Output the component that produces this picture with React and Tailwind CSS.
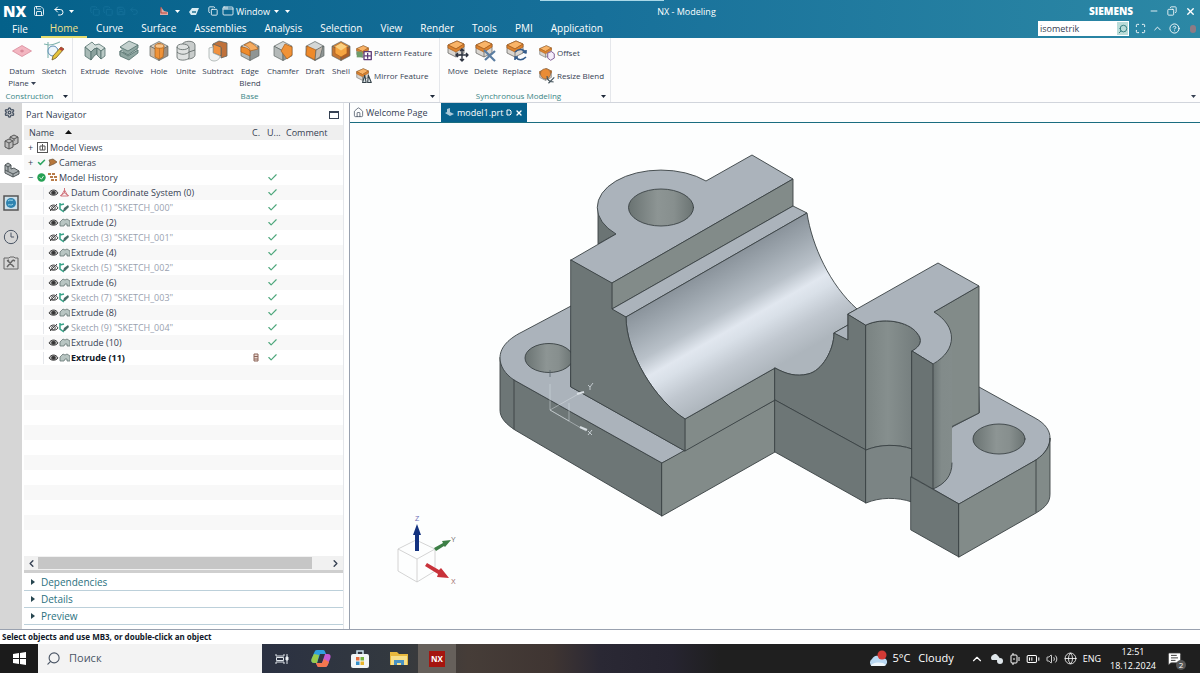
import React, { useState } from "react";
import { Maximize, ChevronUp, ChevronLeft, ChevronRight, CircleHelp, Search, Undo2, Save, AppWindow, Copy, Minus, X, House, Volume2, Globe, BatteryMedium, Settings, Clock3, MessageSquareText, Check } from "lucide-react";

const menu = ["Home", "Curve", "Surface", "Assemblies", "Analysis", "Selection", "View", "Render", "Tools", "PMI", "Application"];

const history = [
    { name: "Datum Coordinate System (0)", kind: "datum" },
    { name: 'Sketch (1) "SKETCH_000"', kind: "sketch" },
    { name: "Extrude (2)", kind: "extrude" },
    { name: 'Sketch (3) "SKETCH_001"', kind: "sketch" },
    { name: "Extrude (4)", kind: "extrude" },
    { name: 'Sketch (5) "SKETCH_002"', kind: "sketch" },
    { name: "Extrude (6)", kind: "extrude" },
    { name: 'Sketch (7) "SKETCH_003"', kind: "sketch" },
    { name: "Extrude (8)", kind: "extrude" },
    { name: 'Sketch (9) "SKETCH_004"', kind: "sketch" },
    { name: "Extrude (10)", kind: "extrude" },
    { name: "Extrude (11)", kind: "extrude", current: true },
];

function Caret({ className }) {
    return (
        <svg className={className} width="5" height="3" viewBox="0 0 5 3"><path d="M0 0h5L2.5 3z" fill="currentColor" /></svg>
    );
}

// Isometric block, the base of most of the feature icons
function Cube({ top = "#d4d7d6", left = "#b4b9b8", right = "#8f9594", children }) {
    return (
        <svg width="22" height="22" viewBox="0 0 22 22" strokeLinejoin="round" stroke="#5c6463" strokeWidth="0.7">
            <path d="M11 1.5 20 6.2 11 11 2 6.2z" fill={top} />
            <path d="M2 6.2 11 11v9.5L2 15.8z" fill={left} />
            <path d="M20 6.2 11 11v9.5l9-4.7z" fill={right} />
            {children}
        </svg>
    );
}

function FeatureIcon({ type }) {
    switch (type) {
        case "plane":
            return (
                <svg width="22" height="22" viewBox="0 0 22 22"><path d="M11 5.5 20.5 11 11 16.5 1.5 11z" fill="#f3b6c1" stroke="#d98a9b" strokeWidth="0.8" /><path d="M11 9.5v3M9 11h4" stroke="#c96d82" strokeWidth="0.7" /></svg>
            );
        case "sketch":
            return (
                <svg width="22" height="22" viewBox="0 0 22 22" fill="none">
                    <path d="M5 2v16M1 4l5 1c6 0 9-3 11-3" stroke="#7fb3ad" strokeWidth="1.1" />
                    <circle cx="10" cy="11" r="5" stroke="#5b8bb3" fill="#eef6fb" />
                    <path d="m18 7 3 2-8 9-4 2 1-4z" fill="#e5c33c" stroke="#6f5a23" strokeWidth="0.8" />
                    <path d="m18 7 3 2-2 2-3-2z" fill="#b8443b" />
                </svg>
            );
        case "extrude":
            return (
                <svg width="22" height="22" viewBox="0 0 22 22" strokeLinejoin="round" stroke="#53706c" strokeWidth="0.8">
                    <path d="M1 7 8 2l3 3 4-1 6 4-4 3-4-3-3 1-3 3z" fill="#d3dedb" />
                    <path d="m1 7 6 5v8l-6-4z" fill="#a7b9b5" />
                    <path d="m7 12 3-3 3-1v6l-2 1-4 5z" fill="#8ba19d" />
                    <path d="m13 8 4 3v8l-4-4z" fill="#a7b9b5" />
                    <path d="m17 11 4-3v8l-4 3z" fill="#b9c9c5" />
                </svg>
            );
        case "revolve":
            return (
                <svg width="22" height="22" viewBox="0 0 22 22" strokeLinejoin="round" stroke="#53706c" strokeWidth="0.8">
                    <path d="m2 7 9-6 9 4-2 3 2 3-9 8-9-4V11l3-1-3-3z" fill="#c3d0cd" />
                    <path d="m2 7 8 4 10-6v3l-10 7-5-3M2 11l8 5 10-6v3l-9 7-9-4z" fill="#8fa6a1" />
                </svg>
            );
        case "hole":
            return (
                <Cube top="#d6cfc6" left="#c9b7a2" right="#9c8e80">
                    <path d="M7 5.5 11 3l5 3-1 11-4 2-4-2z" fill="#ef9237" stroke="#ab5e19" />
                    <ellipse cx="11.5" cy="6" rx="4.5" ry="2.2" fill="#f8c58b" stroke="#ab5e19" />
                    <path d="M11.5 8v10" stroke="#b76f2c" />
                </Cube>
            );
        case "unite":
            return (
                <svg width="22" height="22" viewBox="0 0 22 22" strokeLinejoin="round" stroke="#5c6463" strokeWidth="0.8">
                    <path d="M7 5c1-5 13-5 13 0v10c0 2-3 4-7 4z" fill="#c9cdcc" />
                    <path d="M2 7c0-4 11-4 12 0v11c-2 3-12 3-12-1z" fill="#dfe2e1" />
                    <path d="M2 7c0 3 10 4 12 0M2 12c3 3 9 3 12 0l6-2" fill="none" />
                </svg>
            );
        case "subtract":
            return (
                <svg width="22" height="22" viewBox="0 0 22 22" strokeLinejoin="round" stroke="#5c6463" strokeWidth="0.8">
                    <path d="m6 4 6-3 8 2v13l-6 2V8L6 6z" fill="#c0713a" />
                    <path d="m6 4 8 3v9l-8-3z" fill="#f09240" />
                    <path d="m2 8 4-1v6l7 3c0 3-3 5-6 5s-5-2-5-4z" fill="#f1f3f3" stroke="#a5adac" />
                </svg>
            );
        case "blend":
            return <Cube><path d="M2 7c4 0 7 1 9 4v5L2 12z" fill="#ef8c2c" stroke="#a95d1a" /><path d="M11 11c0-3-3-5-6-6l6-3 3 2c3 2 4 3 5 5z" fill="#f5ac61" stroke="#a95d1a" /></Cube>;
        case "chamfer":
            return <Cube><path d="m13 4 7 3v8l-5 4-6-8z" fill="#f09237" stroke="#a95d1a" /></Cube>;
        case "draft":
            return <Cube><path d="m3 6 9 4-1 10-9-5z" fill="#ee8a2b" stroke="#a95d1a" /><path d="m12 10 7-4-3 11-5 3z" fill="#c3bab0" /></Cube>;
        case "shell":
            return <Cube top="#d9883a" left="#c37635" right="#a85e2a"><path d="m11 3 6 3.5v7L11 17l-6-3.5v-7z" fill="#f6a541" stroke="#b05f1a" /><path d="m5 6.5 6 4 6-4L11 3z" fill="#fbd07f" stroke="none" /></Cube>;
        default:
            return null;
    }
}

// Orange block with a small mark in the corner, for the modeling commands
function OpIcon({ mark, size = 22 }) {
    return (
        <svg width={size} height={size} viewBox="0 0 22 22" strokeLinejoin="round" strokeWidth="0.8">
            <path d="m1 5 9-4 7 3v9l-8 4-8-4z" fill="#d9d5d0" stroke="#6a6a68" />
            <path d="m1 5 9-4 7 3-8 5z" fill="#f9b468" stroke="#a96120" />
            <path d="m9 9 8-5v3l-8 5-8-4V5z" fill="#e0842e" stroke="#a96120" />
            <path d="M9 12v5" stroke="#6a6a68" />
            {mark === "move" && <path d="M15 9v12M9 15h12M13 11l2-2 2 2M13 19l2 2 2-2M11 13l-2 2 2 2M19 13l2 2-2 2" fill="none" stroke="#2d3340" strokeWidth="1.4" />}
            {mark === "delete" && <path d="m9 10 11 11M20 11 10 20" fill="none" stroke="#5b7da1" strokeWidth="2.2" />}
            {mark === "replace" && <path d="M9 12c4-4 9-3 11 1l-3-1m3 1v-3M20 17c-4 4-8 3-11 0l3 0m-3 0v3" fill="none" stroke="#355c8b" strokeWidth="1.6" />}
            {mark === "pattern" && <><path d="M1 9h8v8H1z" fill="#6f9c6a" /><path d="M11 9h10v11H11zM16 11v8M12 15h8" fill="#fff" stroke="#5d3a76" strokeWidth="1.8" /></>}
            {mark === "mirror" && <path d="m9 20 3-10 2 10zM16 20l1-10 4 10z" fill="#dce3e6" stroke="#35434a" strokeWidth="1.5" />}
            {mark === "offset" && <path d="m12 11 5-2 4 3v6l-5 3-4-3z" fill="#f5eefb" stroke="#7d5a93" strokeWidth="1.3" />}
            {mark === "resize" && <><circle cx="9" cy="8" r="7" fill="#e98c36" stroke="#7a5b3e" /><path d="M11 11c0 5 3 8 9 8M13 21l8-8" fill="none" stroke="#46555e" strokeWidth="1.6" /></>}
        </svg>
    );
}

function BigButton({ label, icon, mark, width, dropdown }) {
    return (
        <button className={`flex flex-col items-center ${width}`}>
            {mark ? <OpIcon mark={mark} /> : <FeatureIcon type={icon} />}
            <span className="mt-[3px] leading-3">{label}{dropdown && <Caret className="ml-0.5 inline" />}</span>
        </button>
    );
}

function SmallButton({ label, mark }) {
    return (
        <button className="flex items-center gap-0.5 whitespace-nowrap">
            <OpIcon mark={mark} size={16} />{label}
        </button>
    );
}

function GroupLabel({ children }) {
    return (
        <div className="mt-auto flex h-3 items-center justify-center text-[#3a8686]">
            <span className="flex-1 text-center">{children}</span>
            <button className="px-1 text-gray-800" aria-label={`${children} options`}><Caret /></button>
        </div>
    );
}

function Header() {
    const [active, setActive] = useState("Home");
    return (
        <header className="relative bg-linear-to-r from-[#04618a] via-[#17709a] to-[#2c88a5] text-white">
            <div className="absolute top-0 left-[45%] h-px w-[124px] bg-[#a9d8e8]"></div>
            <div className="grid h-[19px] grid-cols-[1fr_auto_1fr] items-center pr-1 pl-[3px] text-[9px]">
                <div className="flex items-center">
                    <span className="w-[30px] text-[15px] font-extrabold">NX</span>
                    <Save size={12} strokeWidth={1.7} />
                    <Undo2 size={12} className="ml-2" strokeWidth={2} />
                    <Caret className="ml-1" />
                    <div className="ml-4 flex gap-[3px] text-[#16719a]">
                        <Copy size={10} /><Copy size={10} /><Save size={10} /><Undo2 size={10} />
                    </div>
                    <svg className="ml-5" width="10" height="10" viewBox="0 0 10 10"><path d="M2 1l3 4 4 1v3H1z" fill="#dfa9a3" /><path d="M2 1v6h6" stroke="#b9483e" fill="none" /></svg>
                    <Caret className="ml-1.5" />
                    <svg className="ml-2" width="12" height="9" viewBox="0 0 12 9"><path d="M1 5 4 1h7L8 8H3z" fill="#d8ecf3" /><path d="M4 5h4" stroke="#21708f" strokeWidth="1.5" /></svg>
                    <Copy size={10} className="ml-2" />
                    <AppWindow size={12} className="ml-1" strokeWidth={1.6} />
                    <span className="ml-0.5">Window</span>
                    <Caret className="ml-1" />
                    <Caret className="ml-1.5" />
                </div>
                <h1 className="pl-[174px]">NX - Modeling</h1>
                <div className="flex items-center justify-end gap-2">
                    <span className="mr-2 text-[10px] font-extrabold">SIEMENS</span>
                    <button aria-label="Minimize"><Minus size={10} /></button>
                    <button aria-label="Restore"><Copy size={10} className="-scale-x-100" /></button>
                    <button aria-label="Close"><X size={11} strokeWidth={3} /></button>
                </div>
            </div>
            <div className="flex h-[19px] items-stretch justify-between pr-1 pl-[3px]">
                <nav className="flex text-[10px]">
                    <button className="mr-1 px-[9px] leading-5">File</button>
                    {menu.map((item) => (
                        <button key={item} onClick={() => setActive(item)} className={`border-b-2 px-[9px] leading-4 ${item === active ? "border-[#e4dc6f] text-[#f1e08b]" : "border-transparent"}`}>
                            {item}
                        </button>
                    ))}
                </nav>
                <div className="flex items-center gap-1.5">
                    <div className="flex h-[15px] items-center border border-white bg-white">
                        <input className="w-[78px] pl-px text-[9px] leading-3 text-gray-700 outline-none" aria-label="Command finder" defaultValue="isometrik" />
                        <button className="flex h-[13px] w-[11px] items-center justify-center bg-[#b9dcd9] text-[#1f6f73]" aria-label="Find"><Search size={10} className="-scale-x-100" /></button>
                    </div>
                    <button aria-label="Full screen"><Maximize size={11} /></button>
                    <button aria-label="Minimize ribbon"><ChevronUp size={11} /></button>
                    <button aria-label="Help"><CircleHelp size={11} /></button>
                    <span className="ml-1 h-2 w-1.5 rounded-full bg-[#8d7b85]"></span>
                </div>
            </div>
        </header>
    );
}

function Ribbon() {
    return (
        <div className="flex h-[65px] border-b border-gray-300 bg-[#fdfdfd] text-[8px] text-gray-700">
            <section className="flex w-[73px] flex-col border-r border-gray-200 pt-0.5">
                <div className="flex items-start pl-1.5">
                    <BigButton label="Datum Plane" icon="plane" width="w-8" dropdown />
                    <BigButton label="Sketch" icon="sketch" width="w-8" />
                </div>
                <GroupLabel>Construction</GroupLabel>
            </section>
            <section className="flex w-[367px] flex-col border-r border-gray-200 pt-0.5">
                <div className="flex items-start pl-[5px]">
                    <BigButton label="Extrude" icon="extrude" width="w-[34px]" />
                    <BigButton label="Revolve" icon="revolve" width="w-[34px]" />
                    <BigButton label="Hole" icon="hole" width="w-[26px]" />
                    <BigButton label="Unite" icon="unite" width="w-[28px]" />
                    <BigButton label="Subtract" icon="subtract" width="w-[36px]" />
                    <BigButton label="Edge Blend" icon="blend" width="w-[28px]" />
                    <BigButton label="Chamfer" icon="chamfer" width="w-[38px]" />
                    <BigButton label="Draft" icon="draft" width="w-[26px]" />
                    <BigButton label="Shell" icon="shell" width="w-[26px]" />
                    <div className="flex flex-col gap-[7px] pt-[5px] pl-0.5">
                        <SmallButton label="Pattern Feature" mark="pattern" />
                        <SmallButton label="Mirror Feature" mark="mirror" />
                    </div>
                </div>
                <GroupLabel>Base</GroupLabel>
            </section>
            <section className="flex w-[171px] flex-col border-r border-gray-200 pt-0.5">
                <div className="flex items-start pl-1">
                    <BigButton label="Move" mark="move" width="w-[28px]" />
                    <BigButton label="Delete" mark="delete" width="w-[28px]" />
                    <BigButton label="Replace" mark="replace" width="w-[34px]" />
                    <div className="flex flex-col gap-[7px] pt-[5px] pl-[5px]">
                        <SmallButton label="Offset" mark="offset" />
                        <SmallButton label="Resize Blend" mark="resize" />
                    </div>
                </div>
                <GroupLabel>Synchronous Modeling</GroupLabel>
            </section>
            <button className="mt-auto mr-1 mb-1 ml-auto" aria-label="Ribbon options"><Caret /></button>
        </div>
    );
}

function SideBar() {
    return (
        <aside className="flex w-[22px] shrink-0 flex-col items-center bg-[#d6d6d6] text-gray-600">
            <button className="flex h-[18px] w-full items-center pl-1" aria-label="Settings"><Settings size={11} strokeWidth={3} /></button>
            <button className="mt-2 flex h-[26px] items-center" aria-label="Assembly Navigator">
                <svg width="15" height="16" viewBox="0 0 15 16" stroke="#555" fill="#bcbcbc"><path d="m6 3 4-2 4 2v6l-4 2-4-2z" /><path d="m1 7 4-2 4 2v6l-4 2-4-2z" /><path d="m1 7 4 2 4-2M5 9v6M6 3l4 2 4-2M10 5v2" fill="none" /></svg>
            </button>
            <button className="flex h-7 w-full items-center justify-center bg-white" aria-label="Part Navigator">
                <svg width="17" height="17" viewBox="0 0 17 17" stroke="#4f5658" fill="#a9afb1"><path d="M2 9V4l3-2 3 2v4l3-1 5 3v3l-6 3-8-4z" /><path d="m2 4 3 2 3-2M5 6v4M2 9l8 4 6-3M10 13v3" fill="none" /></svg>
            </button>
            <button className="mt-2 flex h-6 items-center" aria-label="Internet Explorer">
                <svg width="16" height="16" viewBox="0 0 16 16"><rect x="1" y="1" width="14" height="14" fill="#cde0ea" stroke="#555" strokeWidth="1.5" /><circle cx="8" cy="8" r="5" fill="#2e83b0" /><path d="M5 6c2-2 4 0 5-1M5 10c2-1 3 1 5-1" stroke="#a5dcec" fill="none" /></svg>
            </button>
            <button className="mt-2.5 flex h-6 items-center" aria-label="History"><Clock3 size={16} strokeWidth={1.5} /></button>
            <button className="mt-0.5 flex h-6 items-center" aria-label="Process Studio">
                <svg width="16" height="14" viewBox="0 0 16 14" fill="none" stroke="#666"><path d="M1 2h5l1-1h4l1 1h3v11H1z" /><path d="m4 11 6-7M5 5l6 6M4 5l2-1M10 4l2 1" strokeWidth="1.5" /></svg>
            </button>
        </aside>
    );
}

function RowIcons({ kind }) {
    return (
        <>
            <svg width="11" height="9" viewBox="0 0 11 9" fill="none" stroke="#454545">
                <path d="M1 5c2-4 7-4 9 0-2 3-7 3-9 0z" fill={kind === "sketch" ? "none" : "#b5b5b5"} />
                <circle cx="5.5" cy="4.8" r="1.8" fill={kind === "sketch" ? "none" : "#333"} />
                {kind === "sketch" && <path d="M2 8 9 1" />}
            </svg>
            <svg width="11" height="11" viewBox="0 0 11 11" fill="none">
                {kind === "datum" && <path d="M5.5 1v5L1 9m4.5-3L10 9M2 9h7L5.5 3z" stroke="#d2767f" />}
                {kind === "sketch" && <><path d="M1 1v6l4 3M1 3l4-1" stroke="#36a388" strokeWidth="1.5" /><path d="m4 9 1-3 4-3 1 2-4 4z" fill="#476a65" /></>}
                {kind === "extrude" && <path d="M1 5 4 2l2 1 2-1 3 2v5H8V7H6L5 9H1z" fill="#b8c5c2" stroke="#667674" strokeWidth="0.8" />}
            </svg>
        </>
    );
}

function PartNavigator() {
    const checked = <Check size={11} className="text-[#4ea77c]" strokeWidth={2.5} />;
    return (
        <div className="mr-[5px] ml-0.5 flex w-[320px] shrink-0 flex-col border-r border-gray-200 bg-white text-[9px] text-gray-700">
            <div className="flex h-[22px] items-center justify-between pt-px pr-1 pl-0.5">
                <h2>Part Navigator</h2>
                <button className="h-2 w-2.5 border border-t-2 border-gray-700" aria-label="Undock"></button>
            </div>
            <table className="w-full table-fixed border-collapse">
                <thead>
                    <tr className="h-[15px] bg-[#efefef] text-left leading-3">
                        <th className="pl-[5px] font-normal">Name <svg className="mb-0.5 ml-2 inline" width="7" height="4" viewBox="0 0 7 4"><path d="M0 4h7L3.5 0z" fill="#111" /></svg></th>
                        <th className="w-[15px] font-normal">C.</th>
                        <th className="w-[19px] font-normal">U...</th>
                        <th className="w-[57px] font-normal">Comment</th>
                    </tr>
                </thead>
                <tbody className="leading-3 [&>tr]:h-[15px] [&>tr:nth-child(even)]:bg-[#f8f8f8]">
                    <tr>
                        <td>
                            <div className="flex items-center gap-0.5 pl-1">
                                <span className="w-[7px]">+</span>
                                <svg width="11" height="11" viewBox="0 0 11 11" fill="none" stroke="#555"><rect x="0.5" y="0.5" width="10" height="10" /><path d="M3 4h5v4H3zM5.5 2v6" /></svg>
                                Model Views
                            </div>
                        </td>
                        <td></td><td></td><td></td>
                    </tr>
                    <tr>
                        <td>
                            <div className="flex items-center gap-0.5 pl-1">
                                <span className="w-[7px]">+</span>
                                <Check size={9} className="text-[#2fa562]" strokeWidth={4} />
                                <svg width="9" height="9" viewBox="0 0 9 9"><path d="m1 2 4-1 4 3-3 2-5 2 1-3z" fill="#b6763a" stroke="#6b5236" strokeWidth="0.7" /></svg>
                                Cameras
                            </div>
                        </td>
                        <td></td><td></td><td></td>
                    </tr>
                    <tr>
                        <td>
                            <div className="flex items-center gap-0.5 pl-1">
                                <span className="w-[7px]">−</span>
                                <svg width="9" height="9" viewBox="0 0 9 9"><circle cx="4.5" cy="4.5" r="4.2" fill="#26a154" /><path d="m2.5 4.5 2 1.5 2-3" stroke="#d8f3e0" fill="none" /></svg>
                                <svg width="9" height="9" viewBox="0 0 9 9"><path d="M0 1h8M2 4h7M3 7h6" stroke="#b97c49" strokeWidth="2" strokeDasharray="3 1" /></svg>
                                Model History
                            </div>
                        </td>
                        <td></td><td>{checked}</td><td></td>
                    </tr>
                    {history.map((f) => (
                        <tr key={f.name}>
                            <td>
                                <div className={`ml-[19px] flex items-center whitespace-nowrap border-l border-gray-200 pl-1 ${f.kind === "sketch" ? "text-gray-400" : ""} ${f.current ? "font-bold text-gray-900" : ""}`}>
                                    <RowIcons kind={f.kind} />
                                    <span className="pl-px">{f.name}</span>
                                </div>
                            </td>
                            <td>{f.current && <svg className="ml-px" width="6" height="9" viewBox="0 0 6 9"><path d="M1 1h4v7H1zM1 3.5h4M1 6h4" fill="#ead9d2" stroke="#8b6458" /></svg>}</td>
                            <td>{checked}</td>
                            <td></td>
                        </tr>
                    ))}
                    {Array.from({ length: 12 }, (_, i) => (
                        <tr key={i}><td colSpan={4}></td></tr>
                    ))}
                </tbody>
            </table>
            <div className="mt-auto flex h-[14px] items-center bg-[#f1f1f1] px-0.5">
                <button aria-label="Scroll left"><ChevronLeft size={11} strokeWidth={3} /></button>
                <div className="mx-px h-3 flex-1"><div className="h-full w-[94%] bg-[#c6c6c6]"></div></div>
                <button aria-label="Scroll right"><ChevronRight size={11} strokeWidth={3} /></button>
            </div>
            <div className="mb-px h-[3px] bg-[#cfcfcf]"></div>
            {["Dependencies", "Details", "Preview"].map((s) => (
                <button key={s} className="flex h-[17px] items-center gap-1.5 border-b border-[#bcd0da] pl-[7px] text-left text-[10px] leading-3 text-[#2b7180]">
                    <svg width="4" height="6" viewBox="0 0 4 6"><path d="M0 0v6l4-3z" fill="#274650" /></svg>{s}
                </button>
            ))}
            <div className="h-1"></div>
        </div>
    );
}

function Model() {
    return (
        <svg className="block h-auto w-full" viewBox="350 123 850 506" role="img" aria-label="model1">
            <defs>
                <linearGradient id="bore" gradientUnits="userSpaceOnUse" x1="716" y1="265" x2="775" y2="368">
                    <stop offset="0" stopColor="#8a939b" />
                    <stop offset="0.18" stopColor="#9fa8b0" />
                    <stop offset="0.38" stopColor="#b9c1c9" />
                    <stop offset="0.53" stopColor="#e1e7ef" />
                    <stop offset="0.62" stopColor="#d9e0e8" />
                    <stop offset="0.8" stopColor="#c0c7cf" />
                    <stop offset="1" stopColor="#adb5bc" />
                </linearGradient>
                <linearGradient id="hole">
                    <stop offset="0" stopColor="#6a7372" />
                    <stop offset="0.45" stopColor="#8d9594" />
                    <stop offset="0.7" stopColor="#878f8e" />
                    <stop offset="1" stopColor="#6b7473" />
                </linearGradient>
                <linearGradient id="cut">
                    <stop offset="0" stopColor="#7a8382" />
                    <stop offset="0.4" stopColor="#868f8e" />
                    <stop offset="1" stopColor="#717a7a" />
                </linearGradient>
                <linearGradient id="side">
                    <stop offset="0" stopColor="#6c7575" />
                    <stop offset="0.45" stopColor="#828b8a" />
                    <stop offset="1" stopColor="#838c8b" />
                </linearGradient>
                <clipPath id="behindWall"><path d="M490 320h81v80h-81z" /></clipPath>
            </defs>
            <rect x="350" y="123" width="850" height="506" fill="#fdfefe" />
            <g stroke="#3a4244" strokeWidth="0.9" strokeLinejoin="round" strokeLinecap="round">
                {/* base plate, left */}
                <path d="M500 358v52c0 8 6 14 15 20l147 86v-53L514 380z" fill="#6d7676" />
                <path d="M571 306 522 332c-16 8-22 17-22 26 0 8 5 16 14 22l148 83 23-12-114-64z" fill="#abb3bb" />
                <path d="M514 380v49" />
                <ellipse cx="549" cy="358" rx="24" ry="14.5" fill="url(#hole)" clipPath="url(#behindWall)" />
                <path d="m662 463 113-63v52l-113 64z" fill="#828b89" />
                <path d="m685 419 90-51v32l-90 51z" fill="#828b89" />

                {/* boss and upper slab */}
                <path d="M598 208v36l18-10z" fill="#6b7474" />
                <path d="M571 260 616 234A63 37 0 1 1 706 181L752 155l41 24-181 104z" fill="#abb3bb" />
                <ellipse cx="661" cy="207.5" rx="32.5" ry="18.5" fill="url(#hole)" />
                <path d="M612 283 793 179v27L612 309z" fill="#828b89" />
                <path d="m612 309 181-103 14 7-181 104z" fill="#abb3bb" />
                <path d="M626 317 807 213C812 246 830 285 857 309l-9 5v11l-14 8c0 17-12 38-26 41-12 3-22 0-33-6l-90 51C655 400 626 353 626 317z" fill="url(#bore)" />
                <path d="M571 260l41 23v26l14 8c0 36 29 83 59 102v32l-114-64z" fill="#6d7676" />

                {/* right block */}
                <path d="M834 333l14-8v15z" fill="#abb3bb" />
                <path d="M775 368c11 6 21 9 33 6 14-3 26-24 26-41l14 7v-26l18 11v125l-91-50z" fill="#6d7676" />
                <path d="m775 400 91 50v53l-91-51z" fill="#6d7676" />
                <path d="M866 325c16-8 42-4 51 8 6 7 4 13-5 18v98c-14-5-32-5-46 1z" fill="url(#cut)" />
                <path d="M866 450c14-6 32-6 46-1v53c-15-5-32-5-46 1z" fill="#7b8484" />
                <path d="m979 387 56 31c11 6 15 13 15 20s-4 15-14 22l-77 44-26-15 19-62 27-14z" fill="#abb3bb" />
                <path d="M934 312 979 286v127l-28 14z" fill="#828b89" />
                <path d="M934 312c23 14 24 38-1 52v125c12-5 19-13 19-26V340z" fill="url(#side)" stroke="none" />
                <path d="M933 489c12-5 19-13 19-26" fill="none" />
                <path d="M848 314 938 263l41 23-45 26c23 14 24 38-1 52l-21-13c9-5 11-11 5-18-9-12-35-16-51-8z" fill="#abb3bb" />
                <path d="m912 351 21 13v125l-21-12z" fill="#6a7373" />
                <path d="m911 477 48 27v53l-48-27z" fill="#6d7676" />
                <path d="m959 504 77-44c10-7 14-14 14-22v56c0 8-4 13-14 19l-77 44z" fill="#828b89" />
                <path d="M1036 460v52" />
                <ellipse cx="999" cy="439" rx="26" ry="15" fill="url(#hole)" />
            </g>

            {/* datum coordinate system */}
            <g fill="none" stroke="#d9dfe4" strokeWidth="0.8">
                <path d="M550 384v26l36 21M550 410l32-18M569 403v18l-19-11" strokeOpacity="0.6" />
                <path d="m580 427 7 3M577 394l7-2" strokeWidth="2" />
                <path d="m588 385 2 2 3-4M590 387v3M588 431l4 4M592 430l-4 5" />
                <path d="M550 370v7" stroke="#59666d" />
            </g>

            {/* view triad */}
            <g strokeLinejoin="round">
                <path d="m398 549 18-9 19 9v22l-18 11-19-11zM398 549l19 10 18-10M417 559v23" fill="none" stroke="#c9c9c9" strokeWidth="0.8" />
                <path d="M415 551v-16h-2l4-11 4 11h-2v16z" fill="#13327f" />
                <path d="m434 548 9-5-1-2 9-1-6 7-1-1-8 5z" fill="#3d7f46" />
                <path d="m425 566 2-3 12 7 2-2 8 10-12-1 1-3z" fill="#c8323a" />
                <g fontFamily="Liberation Sans, sans-serif" fontSize="7" fill="#777">
                    <text x="415" y="521" fill="#6f6fb5">Z</text>
                    <text x="451" y="542">Y</text>
                    <text x="451" y="584" fill="#a06d6d">X</text>
                </g>
            </g>
        </svg>
    );
}

function Workspace() {
    return (
        <main className="min-w-0 flex-1 border-l border-gray-400 bg-[#fdfefe]">
            <div className="flex h-5 items-stretch border-b border-[#1a6d80] text-[9px]">
                <button className="flex w-[91px] items-center gap-0.5 pl-[3px] text-gray-700"><House size={11} strokeWidth={1.5} />Welcome Page</button>
                <button className="flex items-center gap-[3px] bg-[#07618c] px-1 text-white">
                    <svg width="9" height="9" viewBox="0 0 9 9"><path d="m0 5 2-1V1l3-1v4l4 2-4 2z" fill="#a9c8d8" /></svg>
                    model1.prt
                    <svg width="6" height="7" viewBox="0 0 6 7"><path d="M1 1h3l1 1v3L4 6H1z" fill="none" stroke="#fff" /></svg>
                    <X size={8} strokeWidth={4} />
                </button>
            </div>
            <Model />
        </main>
    );
}

function TaskBar() {
    return (
        <footer className="flex h-[29px] items-stretch bg-[linear-gradient(90deg,#2b3142_22%,#33393f_33%,#463d38_39%,#3f3532_46%,#2a2834_50%,#262430_56%,#1f1f1f_60%)] text-white">
            <button className="flex w-[38px] items-center justify-center bg-[#1b1b1b]" aria-label="Start">
                <svg width="13" height="13" viewBox="0 0 13 13" fill="#fff"><path d="M0 2l6-1v5H0zM7 1l6-1v6H7zM0 7h6v5l-6-1zM7 7h6v6l-6-1z" /></svg>
            </button>
            <label className="flex w-[224px] items-center gap-2 bg-[#f3f3f3] pl-2 text-gray-600">
                <Search size={15} className="-scale-x-100" strokeWidth={1.8} />
                <input className="w-40 text-[11px] outline-none placeholder:text-gray-600" placeholder="Поиск" aria-label="Поиск" />
            </label>
            <button className="flex w-[39px] items-center justify-center" aria-label="Task view">
                <svg width="14" height="12" viewBox="0 0 14 12" fill="none" stroke="#dfe4ea"><path d="M1 1v2h8V1M1 11V9h8v2M1.5 4.5h7v3h-7zM12 1v10" /><path d="M11 4h2v3h-2z" fill="#fff" /></svg>
            </button>
            <button className="flex w-[39px] items-center justify-center" aria-label="Copilot">
                <svg width="20" height="19" viewBox="0 0 20 19">
                    <path d="M6 1h6c2 0 2 2 3 4H9L6 14H3c-3 0-3-3-2-5l2-5c1-2 1-3 3-3z" fill="#2f9fe0" />
                    <path d="M1 9l2-4 5 1-2 8H3c-3 0-3-3-2-5z" fill="#9acb4b" />
                    <path d="M14 18H8c-2 0-2-2-3-4h6l3-9h3c3 0 3 3 2 5l-2 5c-1 2-1 3-3 3z" fill="#c35ad0" />
                    <path d="M14 18H8c-2 0-2-2-3-4h6l2-4 5 3c-1 3-2 5-4 5z" fill="#f4774e" />
                </svg>
            </button>
            <button className="flex w-[39px] items-center justify-center" aria-label="Microsoft Store">
                <svg width="18" height="18" viewBox="0 0 18 18"><path d="M6 4V1h6v3" fill="none" stroke="#cbe4ee" strokeWidth="1.5" /><rect y="4" width="18" height="14" rx="2" fill="#f1f5f6" /><path d="M5 7h3.500v3.500H5z" fill="#e56b3a" /><path d="M9.500 7H13v3.500H9.500z" fill="#73b13b" /><path d="M5 11.500h3.500V15H5z" fill="#338fc9" /><path d="M9.500 11.500H13V15H9.500z" fill="#e9b52b" /></svg>
            </button>
            <button className="flex w-[39px] items-center justify-center" aria-label="File Explorer">
                <svg width="18" height="15" viewBox="0 0 18 15"><path d="M0 1h7l2 2h9v11H0z" fill="#e9b93d" /><path d="M1 5h16v9H1z" fill="#f8e08a" /><path d="M4 14V9h10v5h-3v-2H7v2z" fill="#4a93c4" /></svg>
            </button>
            <button className="flex w-[38px] items-center justify-center bg-[#66605b]" aria-label="NX">
                <span className="flex h-4 w-4 items-center justify-center bg-[#a5150f] text-[8px] font-bold">NX</span>
            </button>
            <div className="ml-auto flex items-center text-[11px]">
                <svg width="20" height="18" viewBox="0 0 20 18"><path d="M4 16a4 4 0 0 1 0-7 6 6 0 0 1 10-1 4 4 0 0 1 2 8z" fill="#b9d8f2" /><path d="M3 16c0-4 12-5 15-1l-2 1z" fill="#eef6fc" /><circle cx="14" cy="5" r="4.5" fill="#d33a35" /></svg>
                <span className="ml-1">5°C</span>
                <span className="ml-2">Cloudy</span>
                <div className="ml-4 flex items-center gap-1.5 text-[9px]">
                    <ChevronUp size={14} />
                    <svg width="14" height="11" viewBox="0 0 14 11" fill="#dfe6ea"><path d="M2 7a3 3 0 0 1 1-5 3 3 0 0 1 5 1 3 3 0 0 1 1 4z" /><circle cx="10" cy="8" r="3" /></svg>
                    <svg width="10" height="12" viewBox="0 0 10 12" fill="none" stroke="#fff"><rect x="1" y="2" width="6" height="8" rx="1" /><path d="M3 0v2M3 10v2M9 4v4M3 6h2" /></svg>
                    <BatteryMedium size={14} strokeWidth={1.8} />
                    <Volume2 size={12} strokeWidth={1.6} />
                    <Globe size={13} strokeWidth={1.5} />
                    <span>ENG</span>
                </div>
                <div className="ml-2 w-12 text-center text-[9px] leading-[14px]">
                    <div>12:51</div>
                    <div>18.12.2024</div>
                </div>
                <button className="relative mr-[18px] ml-2.5" aria-label="Notifications">
                    <MessageSquareText size={15} fill="#fff" stroke="#333" strokeWidth={1.5} />
                    <span className="absolute -right-1 -bottom-1 h-2.5 w-2.5 rounded-full bg-[#555] text-center text-[8px] leading-[10px]">2</span>
                </button>
            </div>
        </footer>
    );
}

function App() {
    return (
        <div className="flex min-h-screen flex-col bg-white font-['Open_Sans',sans-serif]">
            <Header />
            <Ribbon />
            <div className="flex flex-1 bg-white">
                <SideBar />
                <PartNavigator />
                <Workspace />
            </div>
            <div className="h-[15px] border-t border-gray-400 bg-white pl-0.5 font-['Noto_Sans',sans-serif] text-[8px] leading-[14px] font-bold text-gray-900">Select objects and use MB3, or double-click an object</div>
            <TaskBar />
        </div>
    );
}
export default App;
